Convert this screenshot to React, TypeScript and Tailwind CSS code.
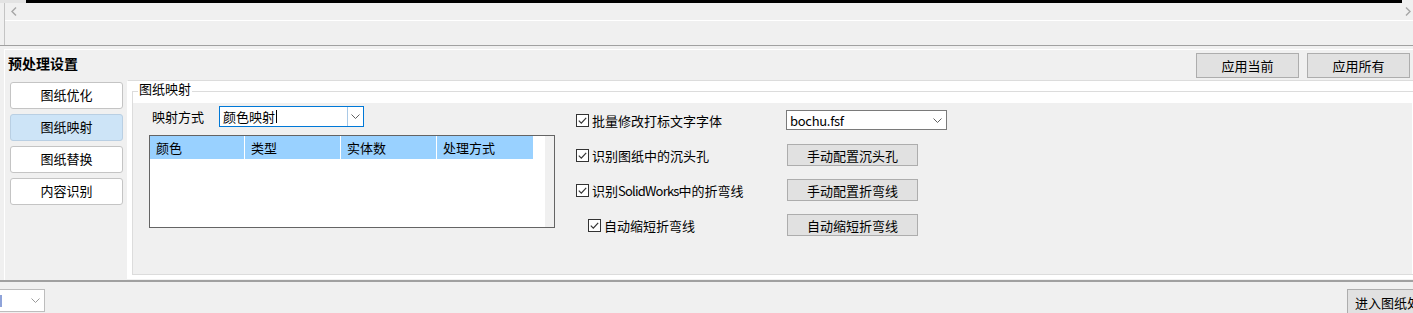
import React from "react";

// Small drop-down arrow used by the combo boxes
function Chevron({ color = "#606060" }: { color?: string }) {
  return (
    <svg width="9" height="5" viewBox="0 0 9 5">
      <path d="M0.5 0.5 L4.5 4.5 L8.5 0.5" fill="none" stroke={color} strokeWidth="1" />
    </svg>
  );
}

function CheckBox() {
  return (
    <div className="flex h-[13px] w-[13px] shrink-0 items-center justify-center border border-[#333333] bg-white">
      <svg width="11" height="11" viewBox="0 0 11 11">
        <path d="M1.8 5.6 L4.3 8.1 L9.2 2.8" fill="none" stroke="#333333" strokeWidth="1.2" />
      </svg>
    </div>
  );
}

function Button({ children, className = "" }: { children: React.ReactNode; className?: string }) {
  return (
    <div
      className={
        "flex items-center justify-center border border-[#adadad] bg-[#e1e1e1] text-[13px] leading-[13px] " +
        className
      }
    >
      {children}
    </div>
  );
}

const navItems = ["图纸优化", "图纸映射", "图纸替换", "内容识别"];
const columns = [
  { label: "颜色", w: "w-[95px]" },
  { label: "类型", w: "w-[96px]" },
  { label: "实体数", w: "w-[96px]" },
  { label: "处理方式", w: "w-[96px]" },
];

export default function App() {
  return (
    <div className="relative h-[313px] w-[1413px] overflow-hidden bg-[#f0f0f0] font-['Noto_Sans_CJK_SC','Noto_Sans',sans-serif] text-[13px] leading-[13px] text-black">
      {/* top strip */}
      <div className="flex h-[3px]">
        <div className="w-[26px] bg-[#e3e3e3]" />
        <div className="w-[1376px] bg-black" />
        <div className="flex-1" />
      </div>

      {/* scroll row */}
      <div className="ml-[4px] border-l border-[#c4c4c4]">
        <div className="flex h-[17px] items-center justify-between pl-[6px] pr-[2px]">
          <svg width="6" height="9" viewBox="0 0 6 9">
            <path d="M5 0.5 L1 4.5 L5 8.5" fill="none" stroke="#a6a6a6" strokeWidth="1.4" />
          </svg>
          <svg width="6" height="9" viewBox="0 0 6 9">
            <path d="M1 0.5 L5 4.5 L1 8.5" fill="none" stroke="#a6a6a6" strokeWidth="1.4" />
          </svg>
        </div>
        <div className="h-px bg-white" />
        <div className="h-[24px]" />
      </div>
      <div className="h-px bg-[#a0a0a0]" />
      <div className="h-[3px]" />

      {/* settings section */}
      <div className="ml-[4px] flex h-[231px] flex-col border-l border-t border-white">
        <div className="flex h-[30px] items-start justify-between pl-[3px] pr-[3px]">
          <span className="mt-[6px] text-[14px] font-bold leading-[14px]">预处理设置</span>
          <div className="mt-[3px] flex gap-[8px]">
            <Button className="h-[25px] w-[103px]">应用当前</Button>
            <Button className="h-[25px] w-[103px]">应用所有</Button>
          </div>
        </div>

        <div className="flex flex-1">
          {/* left nav */}
          <div className="flex w-[122px] shrink-0 flex-col gap-[5px] pl-[5px] pt-[2px]">
            {navItems.map((item, i) => (
              <div
                key={item}
                className={
                  "flex h-[27px] w-[113px] items-center justify-center rounded-[3px] border pb-[2px] " +
                  (i === 1 ? "border-[#b9cfe3] bg-[#cde4f7]" : "border-[#c4c4c4] bg-white")
                }
              >
                {item}
              </div>
            ))}
          </div>

          {/* right panel */}
          <div className="flex h-[199px] flex-1 flex-col border-b border-l border-t border-b-white border-l-white border-t-[#dcdcdc] bg-white pb-[3px] pl-[4px] pt-[10px]">
            <div className="relative flex flex-1 flex-col border-b border-l border-t border-[#dcdcdc] bg-white pt-[11px]">
              <span className="absolute left-[5px] top-[-10px] bg-white px-[1px]">图纸映射</span>

              <div className="flex flex-1 items-start border-r border-white bg-[#f0f0f0] pl-[16px]">
                {/* mapping */}
                <div className="flex w-[406px] shrink-0 flex-col pt-[3px]">
                  <div className="flex h-[21px] items-center">
                    <span className="w-[70px] pl-[3px]">映射方式</span>
                    <div className="flex h-[21px] w-[145px] border border-[#0078d7] bg-white">
                      <div className="flex flex-1 items-center pl-[3px]">
                        颜色映射
                        <div className="ml-px h-[13px] w-px bg-black" />
                      </div>
                      <div className="flex w-[16px] items-center justify-center border-l border-[#a9c9e6]">
                        <Chevron />
                      </div>
                    </div>
                  </div>

                  <div className="mt-[8px] flex h-[93px] w-[406px] border border-[#646464] bg-white">
                    <div className="flex flex-1 flex-col">
                      <div className="flex h-[23px]">
                        {columns.map((c, i) => (
                          <div
                            key={c.label}
                            className={
                              "flex items-center bg-[#99d1ff] pl-[6px] " +
                              c.w +
                              (i < columns.length - 1 ? " border-r border-white" : "")
                            }
                          >
                            {c.label}
                          </div>
                        ))}
                      </div>
                    </div>
                    <div className="w-[9px] bg-[#f0f0f0]" />
                  </div>
                </div>

                {/* options */}
                <div className="ml-[21px] flex flex-col gap-[13px] pt-[6px]">
                  <div className="flex h-[22px] items-center">
                    <div className="flex w-[210px] items-center gap-[3px]">
                      <CheckBox />
                      <span>批量修改打标文字字体</span>
                    </div>
                    <div className="flex h-[20px] w-[161px] items-center justify-between border border-[#7a7a7a] bg-white pl-[3px] pr-[4px]">
                      <span className="tracking-[-0.3px]">bochu.fsf</span>
                      <Chevron />
                    </div>
                  </div>
                  <div className="flex h-[22px] items-center">
                    <div className="flex w-[211px] items-center gap-[3px]">
                      <CheckBox />
                      <span>识别图纸中的沉头孔</span>
                    </div>
                    <Button className="h-[22px] w-[131px]">手动配置沉头孔</Button>
                  </div>
                  <div className="flex h-[22px] items-center">
                    <div className="flex w-[211px] items-center gap-[3px]">
                      <CheckBox />
                      <span>
                        识别<span className="tracking-[-0.8px]">SolidWorks</span>中的折弯线
                      </span>
                    </div>
                    <Button className="h-[22px] w-[131px]">手动配置折弯线</Button>
                  </div>
                  <div className="flex h-[22px] items-center">
                    <div className="flex w-[211px] items-center gap-[3px] pl-[12px]">
                      <CheckBox />
                      <span>自动缩短折弯线</span>
                    </div>
                    <Button className="h-[22px] w-[131px]">自动缩短折弯线</Button>
                  </div>
                </div>
              </div>
            </div>
          </div>
        </div>
      </div>
      <div className="h-[2px] bg-[#a0a0a0]" />

      {/* bottom bar */}
      <div className="flex h-[31px] items-start justify-between">
        <div className="mt-[7px] flex h-[23px] w-[45px] items-center justify-between border border-l-0 border-[#bdbdbd] bg-white pr-[4px]">
          <div className="h-[12px] w-[2px] bg-[#8fa3d9]" />
          <Chevron color="#9a9a9a" />
        </div>
        <div className="mr-[-14px] mt-[7px] flex h-[26px] w-[80px] shrink-0 items-center border border-[#adadad] bg-[#e1e1e1] pl-[7px] whitespace-nowrap">
          进入图纸处理
        </div>
      </div>
    </div>
  );
}
